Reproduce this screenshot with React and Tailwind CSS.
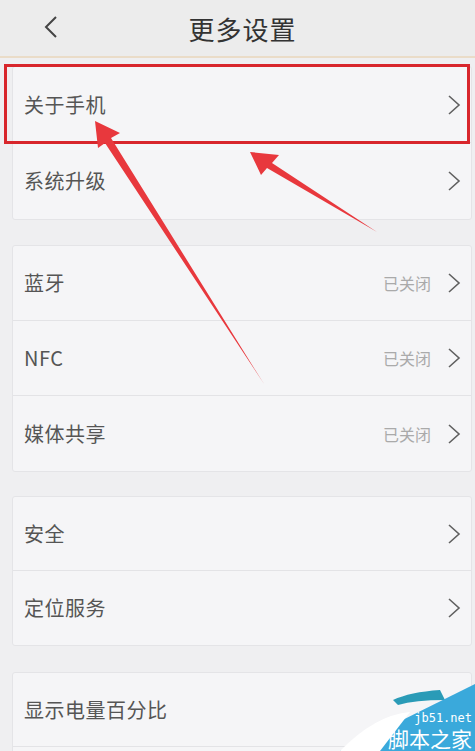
const font = { fontFamily: '"Noto Sans CJK SC", "Noto Sans", sans-serif' };

function Chevron() {
  return (
    <svg width="14" height="22" viewBox="0 0 14 22" className="shrink-0">
      <path d="M2 2 L12 11 L2 20" fill="none" stroke="#606060" strokeWidth="1.6" />
    </svg>
  );
}

function Row({ label, status, h, last }) {
  return (
    <div
      className={`flex items-center justify-between pl-[11px] pr-[10px] ${last ? "" : "border-b border-[#e3e3e6]"}`}
      style={{ height: h }}
    >
      <span className="text-[20px] text-[#555] tracking-[0.5px]">{label}</span>
      <div className="flex items-center gap-[16px]">
        {status && <span className="text-[16px] text-[#aaa]">{status}</span>}
        <Chevron />
      </div>
    </div>
  );
}

function Card({ children, className = "" }) {
  return (
    <div className={`ml-[12px] mr-[3px] bg-[#f5f5f7] border border-[#e4e4e7] rounded-[3px] ${className}`}>
      {children}
    </div>
  );
}

export default function App() {
  return (
    <div className="relative w-[475px] h-[751px] overflow-hidden bg-[#efeff1]" style={font}>
      <div className="h-[58px] bg-[#ececec] border-b-[2px] border-[#eadcc8] flex items-center relative">
        <svg width="16" height="24" viewBox="0 0 16 24" className="absolute left-[43px] top-[15px]">
          <path d="M13 2 L3 12 L13 22" fill="none" stroke="#444" strokeWidth="2" />
        </svg>
        <div className="w-full text-center text-[26px] text-[#333] pl-[10px] tracking-[1px]">更多设置</div>
      </div>

      <Card className="mt-[8px]">
        <Row label="关于手机" h={76} />
        <Row label="系统升级" h={76} last />
      </Card>

      <Card className="mt-[25px]">
        <Row label="蓝牙" status="已关闭" h={75} />
        <Row label="NFC" status="已关闭" h={75} />
        <Row label="媒体共享" status="已关闭" h={75} last />
      </Card>

      <Card className="mt-[24px]">
        <Row label="安全" h={74} />
        <Row label="定位服务" h={74} last />
      </Card>

      <Card className="mt-[26px]">
        <div className="h-[74px] flex items-center pl-[11px] border-b border-[#e3e3e6]">
          <span className="text-[20px] text-[#555] tracking-[0.5px]">显示电量百分比</span>
        </div>
        <div className="h-[40px]" />
      </Card>

      {/* red highlight box */}
      <div className="absolute left-[4px] top-[64px] w-[466px] h-[80px] border-[3px] border-[#d8262c]" />

      {/* arrows */}
      <svg className="absolute left-0 top-0" width="475" height="751" viewBox="0 0 475 751">
        <polygon points="95,121 120,133 111,138 264,384 105,143 98,148" fill="#e8383d" />
        <polygon points="250,152 279,155 272,163 377,232 267,168 261,175" fill="#e8383d" />
      </svg>

      {/* watermark */}
      <svg className="absolute left-0 top-0" width="475" height="751" viewBox="0 0 475 751">
        <path d="M393 700 Q410 692 440 690 L445 700 Q415 700 398 705 Z" fill="#2a9bb7" />
        <polygon points="340,751 475,684 475,751" fill="#3aa9db" />
        <path d="M340 751 Q375 715 410 712 L380 751 Z" fill="#ffffff" />
      </svg>
      <div className="absolute right-[3px] top-[712px] text-white text-[12px] leading-[13px]" style={{ fontFamily: '"DejaVu Sans Mono", monospace' }}>
        jb51.net
      </div>
      <div className="absolute right-[3px] top-[728px] text-white text-[21px] leading-[21px]">脚本之家</div>
    </div>
  );
}
